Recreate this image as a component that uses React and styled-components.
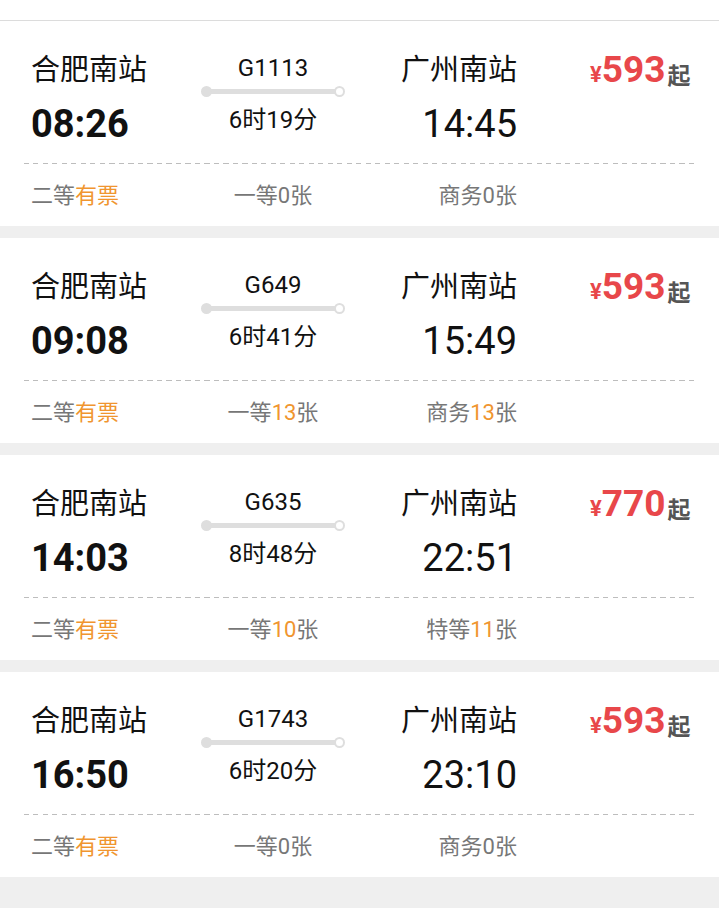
import styled, { createGlobalStyle } from 'styled-components';

const GlobalStyle = createGlobalStyle`
    html, body {
        margin: 0;
        padding: 0;
        background: #efefef;
    }
    body {
        font-family: Roboto, "Noto Sans CJK SC", sans-serif;
        color: #111;
    }
`;

const trains = [
    { from: '合肥南站', to: '广州南站', dep: '08:26', arr: '14:45', no: 'G1113', dur: '6时19分', price: 593,
      seats: [['二等', '有票', true], ['一等', '0', false], ['商务', '0', false]] },
    { from: '合肥南站', to: '广州南站', dep: '09:08', arr: '15:49', no: 'G649', dur: '6时41分', price: 593,
      seats: [['二等', '有票', true], ['一等', '13', true], ['商务', '13', true]] },
    { from: '合肥南站', to: '广州南站', dep: '14:03', arr: '22:51', no: 'G635', dur: '8时48分', price: 770,
      seats: [['二等', '有票', true], ['一等', '10', true], ['特等', '11', true]] },
    { from: '合肥南站', to: '广州南站', dep: '16:50', arr: '23:10', no: 'G1743', dur: '6时20分', price: 593,
      seats: [['二等', '有票', true], ['一等', '0', false], ['商务', '0', false]] },
];

const TopBar = styled.div`
    height: 20px;
    background: #fff;
    border-bottom: 1px solid #dcdcdc;
`;

const List = styled.div`
    display: flex;
    flex-direction: column;
    gap: 12px;
    padding-bottom: 31px;
`;

const Card = styled.div`
    background: #fff;
    padding: 31px 0 15px;
`;

const Main = styled.div`
    display: flex;
    padding-left: 31px;
    height: 94px;
`;

const Col = styled.div`
    display: flex;
    flex-direction: column;
    width: ${(props) => props.width}px;
    align-items: ${(props) => props.align || 'flex-start'};
`;

const Station = styled.div`
    font-size: 29px;
    line-height: 36px;
    height: 36px;
`;

const Time = styled.div`
    margin-top: 14px;
    font-size: 38px;
    line-height: 44px;
    font-weight: ${(props) => (props.bold ? 700 : 400)};
`;

const TrainNo = styled.div`
    margin-top: 2px;
    font-size: 24px;
    line-height: 28px;
`;

const Track = styled.div`
    position: relative;
    margin-top: 4px;
    width: 144px;
    height: 11px;
    &::before {
        content: '';
        position: absolute;
        left: 4px;
        right: 6px;
        top: 3px;
        height: 5px;
        background: #dedede;
    }
`;

// 출발점은 채운 원, 도착점은 속이 빈 원
const Dot = styled.span`
    position: absolute;
    top: 0;
    ${(props) => (props.end ? 'right: 0;' : 'left: 0;')}
    box-sizing: border-box;
    width: 11px;
    height: 11px;
    border-radius: 50%;
    background: ${(props) => (props.end ? '#fff' : '#dedede')};
    border: ${(props) => (props.end ? '2px solid #dedede' : 'none')};
`;

const Duration = styled.div`
    margin-top: 8px;
    font-size: 24px;
    line-height: 30px;
`;

const Price = styled.div`
    margin-left: 73px;
    display: flex;
    align-items: baseline;
    height: 36px;
    line-height: 36px;
    font-weight: 700;
`;

const Yen = styled.span`
    color: #e8474a;
    font-size: 22px;
`;

const Amount = styled.span`
    color: #e8474a;
    font-size: 37px;
    margin-right: 2px;
`;

const Qi = styled.span`
    color: #555;
    font-size: 23px;
    position: relative;
    top: 2px;
`;

const Dash = styled.div`
    margin: 17px 23px 0 24px;
    height: 1px;
    background: repeating-linear-gradient(to right, #bdbdbd 0 5px, transparent 5px 9.5px);
`;

const Seats = styled.div`
    display: flex;
    padding-left: 31px;
    margin-top: 17px;
    height: 30px;
    line-height: 30px;
    font-size: 22px;
    color: #777;
`;

const SeatCell = styled.div`
    width: ${(props) => props.width}px;
    text-align: ${(props) => props.align};
`;

const Avail = styled.span`
    color: ${(props) => (props.hot ? '#f0952f' : '#777')};
`;

function Seat({ seat, width, align }) {
    const [cls, count, hot] = seat;
    const isText = count === '有票';
    return (
        <SeatCell width={width} align={align}>
            {cls}
            <Avail hot={hot}>{count}</Avail>
            {isText ? '' : '张'}
        </SeatCell>
    );
}

function TrainCard({ t }) {
    return (
        <Card>
            <Main>
                <Col width={170}>
                    <Station>{t.from}</Station>
                    <Time bold>{t.dep}</Time>
                </Col>
                <Col width={144} align="center">
                    <TrainNo>{t.no}</TrainNo>
                    <Track>
                        <Dot />
                        <Dot end />
                    </Track>
                    <Duration>{t.dur}</Duration>
                </Col>
                <Col width={172} align="flex-end">
                    <Station>{t.to}</Station>
                    <Time>{t.arr}</Time>
                </Col>
                <Price>
                    <Yen>¥</Yen>
                    <Amount>{t.price}</Amount>
                    <Qi>起</Qi>
                </Price>
            </Main>
            <Dash />
            <Seats>
                <Seat seat={t.seats[0]} width={170} align="left" />
                <Seat seat={t.seats[1]} width={144} align="center" />
                <Seat seat={t.seats[2]} width={172} align="right" />
            </Seats>
        </Card>
    );
}

export default function App() {
    return (
        <>
            <GlobalStyle />
            <TopBar />
            <List>
                {trains.map((t) => (
                    <TrainCard key={t.no} t={t} />
                ))}
            </List>
        </>
    );
}
